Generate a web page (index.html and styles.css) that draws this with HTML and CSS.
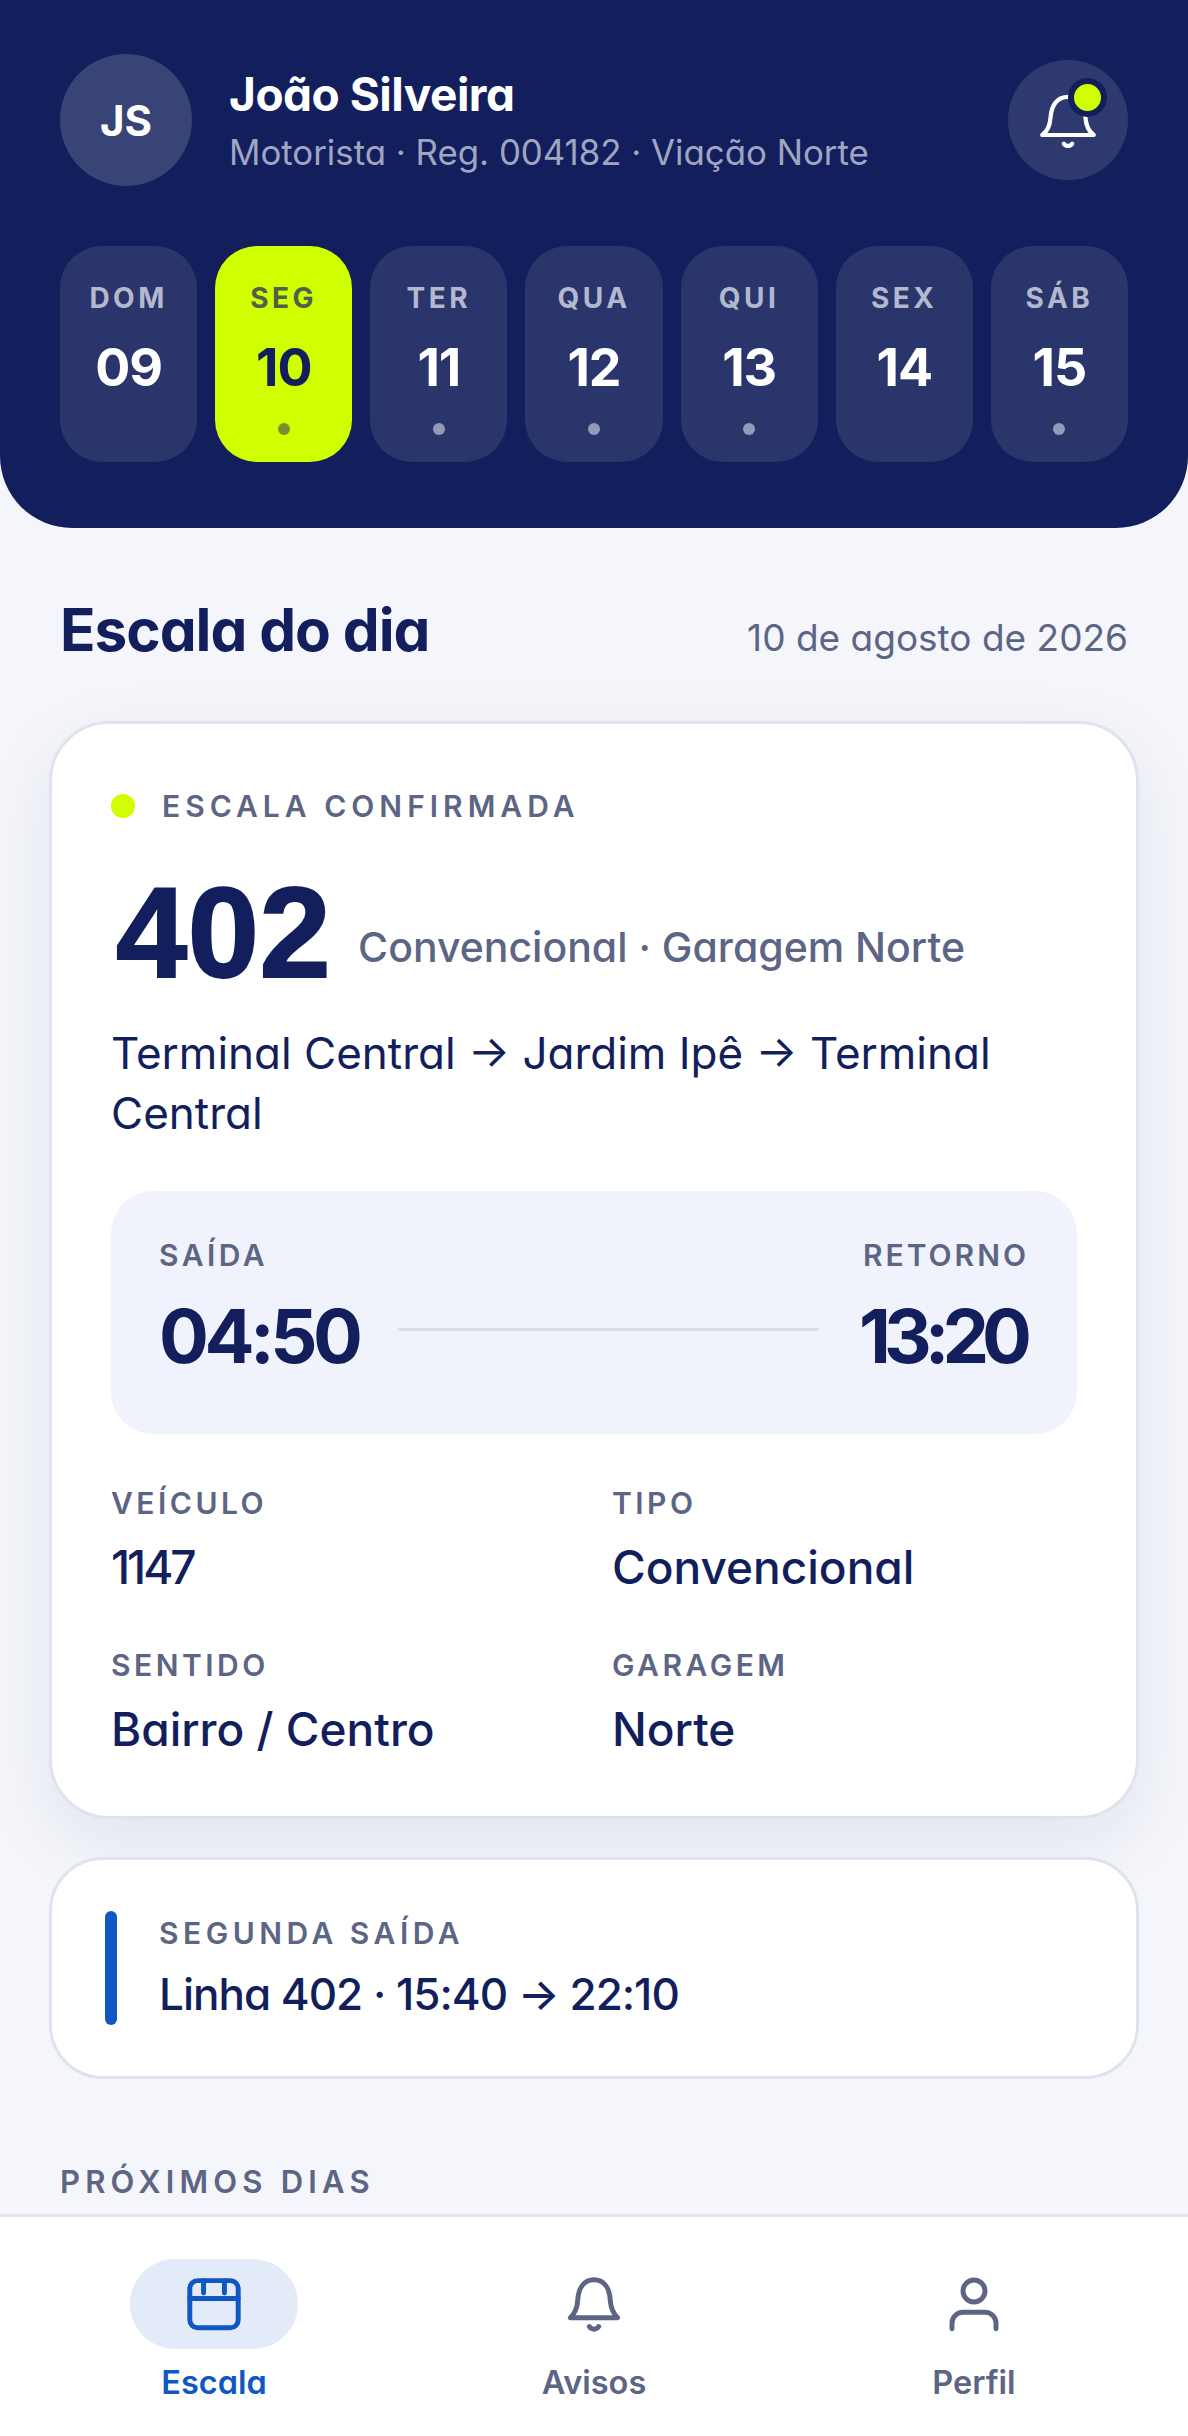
FILE: index.html
```html
<!DOCTYPE html>
<html lang="pt-BR">
<head>
  <meta charset="UTF-8" />
  <meta name="viewport" content="width=device-width, initial-scale=1" />
  <title>Escala do dia</title>
  <link rel="stylesheet" href="styles.css">
</head>
<body>

<header class="top">
  <div class="profile">
    <div class="avatar">JS</div>
    <div class="who">
      <div class="name">João Silveira</div>
      <div class="role">Motorista · Reg. 004182 · Viação Norte</div>
    </div>
    <button class="bell-btn" aria-label="Avisos">
      <svg class="bell-icon" viewBox="0 0 24 24" fill="none" stroke="currentColor" stroke-width="1.4" stroke-linecap="round" stroke-linejoin="round">
        <path d="M3.400 17h17.200c-1.600-1.100-2.600-3-2.800-6C17.500 7 15.500 4.300 12 4.300S6.500 7 6.200 11c-.2 3-1.200 4.900-2.800 6z"/>
        <path d="M10.600 19.900a1.700 1.700 0 0 0 2.800 0"/>
      </svg>
      <span class="bell-dot"></span>
    </button>
  </div>

  <div class="days">
    <div class="day"><span class="dow">DOM</span><span class="num">09</span></div>
    <div class="day active"><span class="dow">SEG</span><span class="num">10</span><span class="mark"></span></div>
    <div class="day"><span class="dow">TER</span><span class="num">11</span><span class="mark"></span></div>
    <div class="day"><span class="dow">QUA</span><span class="num">12</span><span class="mark"></span></div>
    <div class="day"><span class="dow">QUI</span><span class="num">13</span><span class="mark"></span></div>
    <div class="day"><span class="dow">SEX</span><span class="num">14</span></div>
    <div class="day"><span class="dow">SÁB</span><span class="num">15</span><span class="mark"></span></div>
  </div>
</header>

<main class="content">
  <div class="title-row">
    <h1>Escala do dia</h1>
    <span class="date">10 de agosto de 2026</span>
  </div>

  <section class="card">
    <div class="status"><span class="status-dot"></span>ESCALA CONFIRMADA</div>
    <div class="line-row">
      <span class="line-num">402</span>
      <span class="line-sub">Convencional · Garagem Norte</span>
    </div>
    <p class="route">Terminal Central → Jardim Ipê → Terminal Central</p>

    <div class="times">
      <div class="time-col">
        <span class="label">SAÍDA</span>
        <span class="time">04:50</span>
      </div>
      <div class="time-line"></div>
      <div class="time-col right">
        <span class="label">RETORNO</span>
        <span class="time tight">13:20</span>
      </div>
    </div>

    <div class="fields">
      <div><span class="label">VEÍCULO</span><span class="value tight">1147</span></div>
      <div><span class="label">TIPO</span><span class="value">Convencional</span></div>
      <div><span class="label">SENTIDO</span><span class="value">Bairro / Centro</span></div>
      <div><span class="label">GARAGEM</span><span class="value">Norte</span></div>
    </div>
  </section>

  <section class="second">
    <div class="second-bar"></div>
    <div class="second-text">
      <span class="label">SEGUNDA SAÍDA</span>
      <span class="value">Linha 402 · 15:40 → 22:10</span>
    </div>
  </section>

  <h2 class="next-title">PRÓXIMOS DIAS</h2>
</main>

<nav class="tabs">
  <a class="tab current">
    <span class="tab-icon">
      <svg viewBox="0 0 24 24" fill="none" stroke="currentColor" stroke-width="1.8" stroke-linecap="round" stroke-linejoin="round">
        <rect x="3.200" y="3.500" width="17.600" height="17.100" rx="2.800"/>
        <path d="M3.200 10h17.600M8.200 3.500V8M15.800 3.500V8"/>
      </svg>
    </span>
    Escala
  </a>
  <a class="tab">
    <span class="tab-icon">
      <svg viewBox="0 0 24 24" fill="none" stroke="currentColor" stroke-width="1.8" stroke-linecap="round" stroke-linejoin="round">
        <path d="M3.400 17h17.200c-1.700-1.600-2.500-3.300-2.700-6.500C17.600 6 15.500 3.200 12 3.200S6.400 6 6.100 10.500C5.900 13.700 5.100 15.400 3.400 17z"/>
        <path d="M10.300 20.200a2 2 0 0 0 3.400 0"/>
      </svg>
    </span>
    Avisos
  </a>
  <a class="tab">
    <span class="tab-icon">
      <svg viewBox="0 0 24 24" fill="none" stroke="currentColor" stroke-width="1.8" stroke-linecap="round" stroke-linejoin="round">
        <circle cx="12" cy="7.300" r="4"/>
        <path d="M4 21v-2a4 4 0 0 1 4-4h8a4 4 0 0 1 4 4v2"/>
      </svg>
    </span>
    Perfil
  </a>
</nav>

</body>
</html>
```

FILE: styles.css
```css
* {
  box-sizing: border-box;
}
body {
  margin: 0;
  width: 1188px;
  height: 2436px;
  overflow: hidden;
  display: flex;
  flex-direction: column;
  background: #f4f6fb;
  color: #121f5c;
  font-family: Inter, "Noto Sans", sans-serif;
  font-feature-settings: "cv11";
}

/* header */
.top {
  background: #121f5c;
  padding: 54px 60px 66px;
  border-radius: 0 0 72px 72px;
}
.profile {
  display: flex;
  align-items: center;
  height: 132px;
}
.avatar {
  width: 132px;
  height: 132px;
  border-radius: 50%;
  background: rgba(255, 255, 255, 0.16);
  color: #fff;
  font-size: 42px;
  font-weight: 700;
  display: flex;
  align-items: center;
  justify-content: center;
}
.who {
  margin-left: 37px;
}
.name {
  color: #fff;
  font-size: 46px;
  line-height: 60px;
  font-weight: 700;
  letter-spacing: -0.5px;
}
.role {
  color: #a0a5c2;
  font-size: 34.8px;
  line-height: 48px;
  margin-top: 4px;
}
.bell-btn {
  position: relative;
  margin-left: auto;
  width: 120px;
  height: 120px;
  border: none;
  border-radius: 50%;
  background: rgba(255, 255, 255, 0.12);
  color: #fff;
  padding: 0;
  display: flex;
  align-items: center;
  justify-content: center;
}
.bell-icon {
  width: 72px;
  height: 72px;
}
.bell-dot {
  position: absolute;
  top: 18px;
  right: 21px;
  width: 39px;
  height: 39px;
  border-radius: 50%;
  background: #d0ff00;
  border: 6px solid #121f5c;
}

.days {
  display: flex;
  gap: 18px;
  margin-top: 60px;
}
.day {
  flex: 1;
  height: 216px;
  border-radius: 42px;
  background: rgba(255, 255, 255, 0.1);
  padding-top: 34px;
  display: flex;
  flex-direction: column;
  align-items: center;
}
.dow {
  color: #b4b8cf;
  font-size: 28px;
  line-height: 36px;
  font-weight: 700;
  letter-spacing: 3.5px;
}
.num {
  color: #fff;
  font-size: 52px;
  line-height: 60px;
  font-weight: 700;
  margin-top: 22px;
  letter-spacing: -1px;
}
.mark {
  width: 12px;
  height: 12px;
  border-radius: 50%;
  margin-top: 25px;
  background: #9499b6;
}
.day.active {
  background: #d0ff00;
}
.day.active .dow {
  color: #50604a;
}
.day.active .num {
  color: #121f5c;
}
.day.active .mark {
  background: #7a9030;
}

/* content */
.content {
  flex: 1;
  min-height: 0;
  overflow: hidden;
  padding: 0 49px;
}
.title-row {
  display: flex;
  justify-content: space-between;
  align-items: baseline;
  margin: 66px 11px 55px;
}
h1 {
  margin: 0;
  font-size: 58.5px;
  line-height: 72px;
  font-weight: 700;
  letter-spacing: -1px;
}
.date {
  color: #5c6584;
  font-size: 37px;
}
.card {
  background: #fff;
  border: 3px solid #dfe3ec;
  border-radius: 60px;
  padding: 64px 59px 57px;
  box-shadow: 0 24px 72px rgba(18, 31, 92, 0.08);
}
.status {
  display: flex;
  align-items: center;
  color: #5c6584;
  font-size: 30px;
  line-height: 36px;
  font-weight: 600;
  letter-spacing: 5px;
}
.status-dot {
  width: 24px;
  height: 24px;
  border-radius: 50%;
  background: #d0ff00;
  margin-right: 27px;
}
.line-row {
  display: flex;
  align-items: flex-end;
  margin-top: 49px;
}
.line-num {
  font-family: "Liberation Sans", sans-serif;
  font-size: 128px;
  line-height: 120px;
  font-weight: 700;
  letter-spacing: 0.5px;
  -webkit-text-stroke: 2px #121f5c;
  margin-left: 5px;
}
.line-sub {
  color: #5c6584;
  font-size: 41px;
  line-height: 48px;
  font-weight: 500;
  margin-left: 27px;
  margin-bottom: 22px;
}
.route {
  margin: 30px 0 0;
  font-size: 44px;
  line-height: 60px;
  font-weight: 400;
}
.times {
  display: flex;
  align-items: flex-end;
  height: 243px;
  margin-top: 48px;
  padding: 46px 48px 56px;
  border-radius: 42px;
  background: #f0f3fc;
}
.time-col {
  display: flex;
  flex-direction: column;
}
.time-col.right {
  align-items: flex-end;
}
.right .label {
  letter-spacing: 3px;
}
.label {
  display: block;
  color: #5c6584;
  font-size: 30px;
  line-height: 36px;
  font-weight: 600;
  letter-spacing: 3.5px;
}
.time {
  font-size: 74px;
  line-height: 84px;
  font-weight: 700;
  margin-top: 21px;
  letter-spacing: -4.5px;
}
.time.tight {
  letter-spacing: -7px;
  margin-right: 4px;
}
.time-line {
  flex: 1;
  height: 3px;
  margin: 0 40px 47px;
  background: #d9ddec;
}
.fields {
  display: grid;
  grid-template-columns: 1fr 1fr;
  gap: 50px 36px;
  margin-top: 51px;
}
.value {
  display: block;
  font-size: 46px;
  line-height: 60px;
  font-weight: 500;
  margin-top: 16px;
}
.value.tight {
  letter-spacing: -3px;
}
.second {
  display: flex;
  margin-top: 38px;
  padding: 51px 53px;
  background: #fff;
  border: 3px solid #dfe3ec;
  border-radius: 54px;
}
.second-bar {
  width: 12px;
  height: 114px;
  border-radius: 6px;
  background: #0f57c4;
  margin-right: 42px;
}
.second-text {
  padding-top: 4px;
}
.second-text .label {
  letter-spacing: 4.5px;
}
.second-text .value {
  margin-top: 13px;
  font-size: 44px;
  letter-spacing: -1px;
}
.next-title {
  margin: 85px 11px 0;
  color: #5c6584;
  font-size: 31px;
  line-height: 36px;
  font-weight: 600;
  letter-spacing: 5.2px;
}

/* bottom tabs */
.tabs {
  height: 222px;
  flex-shrink: 0;
  display: grid;
  grid-template-columns: repeat(3, 1fr);
  padding: 0 24px;
  background: #fff;
  border-top: 3px solid #e2e5ef;
}
.tab {
  display: flex;
  flex-direction: column;
  align-items: center;
  padding-top: 42px;
  color: #5c6584;
  font-size: 32.5px;
  line-height: 42px;
  font-weight: 600;
}
.tab-icon {
  width: 168px;
  height: 90px;
  border-radius: 45px;
  margin-bottom: 13px;
  display: flex;
  align-items: center;
  justify-content: center;
}
.tab-icon svg {
  width: 66px;
  height: 66px;
}
.tab.current {
  color: #0f57c4;
}
.tab.current .tab-icon {
  background: #e3eaf8;
}
```
